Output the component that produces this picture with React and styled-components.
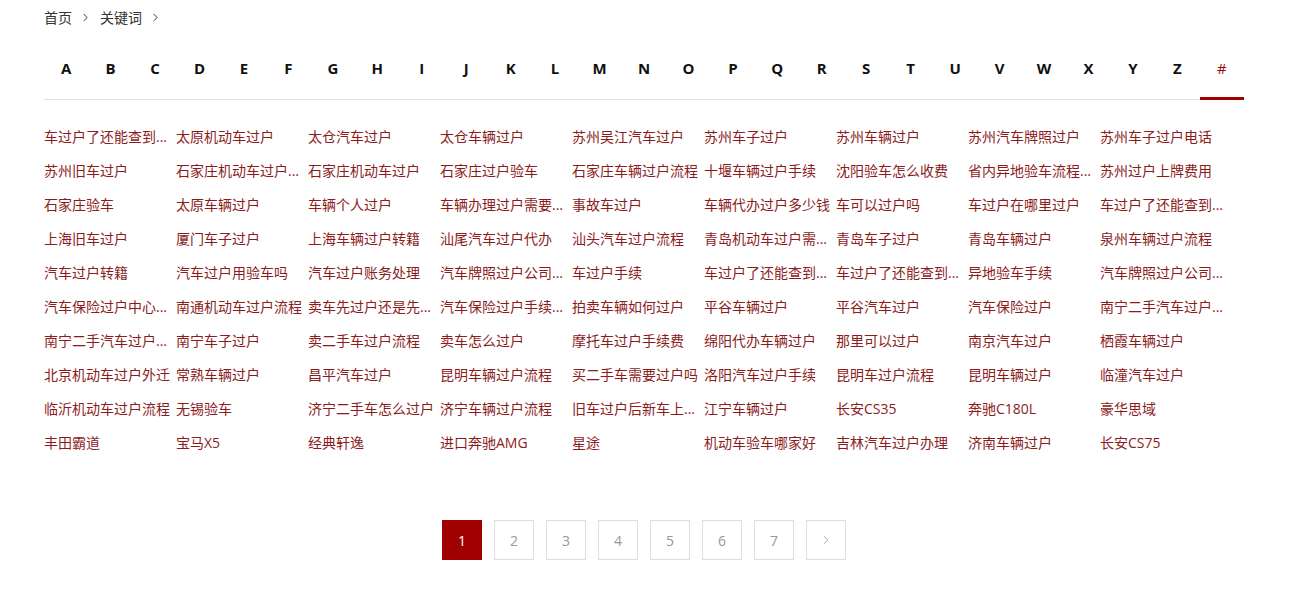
import React from 'react';
import styled, { createGlobalStyle } from 'styled-components';
import { ChevronRight } from 'lucide-react';

const GlobalStyle = createGlobalStyle`
  html, body {
    margin: 0;
    padding: 0;
    background: #fff;
  }
  body {
    font-family: "Open Sans", "Noto Sans CJK SC", sans-serif;
    color: #333;
  }
  * {
    box-sizing: border-box;
  }
`;

const Page = styled.div`
  width: 1244px;
  padding-left: 44px;
`;

const Breadcrumb = styled.div`
  display: flex;
  align-items: center;
  height: 34px;
  font-size: 14px;
  color: #333;

  svg {
    margin: 0 8px 0 7px;
    color: #333;
  }
`;

const Crumb = styled.a`
  color: #333;
  text-decoration: none;
`;

const LetterNav = styled.ul`
  list-style: none;
  margin: 10px 0 0;
  padding: 0;
  display: grid;
  grid-template-columns: repeat(27, 1fr);
  border-bottom: 1px solid #e2e2e2;
`;

const Letter = styled.li`
  height: 56px;
  margin-bottom: -1px;
  display: flex;
  align-items: center;
  justify-content: center;
  padding-bottom: 5px;
  font-size: 15px;
  font-weight: ${p => (p.$active ? 400 : 700)};
  color: ${p => (p.$active ? '#9b0c0c' : '#111')};
  border-bottom: 3px solid ${p => (p.$active ? '#a00000' : 'transparent')};
  cursor: pointer;
`;

const KeywordGrid = styled.div`
  display: grid;
  grid-template-columns: repeat(9, 132px);
  padding-top: 20px;
`;

const Keyword = styled.a`
  display: block;
  height: 34px;
  line-height: 34px;
  padding-right: 4px;
  font-size: 14px;
  color: #8b1c1c;
  text-decoration: none;
  white-space: nowrap;
  overflow: hidden;
  text-overflow: ellipsis;
`;

const Pager = styled.div`
  display: flex;
  justify-content: center;
  gap: 12px;
  margin-top: 60px;
`;

const PageButton = styled.a`
  width: 40px;
  height: 40px;
  display: flex;
  align-items: center;
  justify-content: center;
  font-size: 14px;
  color: ${p => (p.$active ? '#fff' : '#999')};
  background: ${p => (p.$active ? '#a00000' : '#fff')};
  border: 1px solid ${p => (p.$active ? '#a00000' : '#ddd')};
  cursor: pointer;
`;

const letters = 'ABCDEFGHIJKLMNOPQRSTUVWXYZ#'.split('');

const keywords = [
  '车过户了还能查到...', '太原机动车过户', '太仓汽车过户', '太仓车辆过户', '苏州吴江汽车过户', '苏州车子过户', '苏州车辆过户', '苏州汽车牌照过户', '苏州车子过户电话',
  '苏州旧车过户', '石家庄机动车过户...', '石家庄机动车过户', '石家庄过户验车', '石家庄车辆过户流程', '十堰车辆过户手续', '沈阳验车怎么收费', '省内异地验车流程...', '苏州过户上牌费用',
  '石家庄验车', '太原车辆过户', '车辆个人过户', '车辆办理过户需要...', '事故车过户', '车辆代办过户多少钱', '车可以过户吗', '车过户在哪里过户', '车过户了还能查到...',
  '上海旧车过户', '厦门车子过户', '上海车辆过户转籍', '汕尾汽车过户代办', '汕头汽车过户流程', '青岛机动车过户需...', '青岛车子过户', '青岛车辆过户', '泉州车辆过户流程',
  '汽车过户转籍', '汽车过户用验车吗', '汽车过户账务处理', '汽车牌照过户公司...', '车过户手续', '车过户了还能查到...', '车过户了还能查到...', '异地验车手续', '汽车牌照过户公司...',
  '汽车保险过户中心...', '南通机动车过户流程', '卖车先过户还是先...', '汽车保险过户手续...', '拍卖车辆如何过户', '平谷车辆过户', '平谷汽车过户', '汽车保险过户', '南宁二手汽车过户...',
  '南宁二手汽车过户...', '南宁车子过户', '卖二手车过户流程', '卖车怎么过户', '摩托车过户手续费', '绵阳代办车辆过户', '那里可以过户', '南京汽车过户', '栖霞车辆过户',
  '北京机动车过户外迁', '常熟车辆过户', '昌平汽车过户', '昆明车辆过户流程', '买二手车需要过户吗', '洛阳汽车过户手续', '昆明车过户流程', '昆明车辆过户', '临潼汽车过户',
  '临沂机动车过户流程', '无锡验车', '济宁二手车怎么过户', '济宁车辆过户流程', '旧车过户后新车上...', '江宁车辆过户', '长安CS35', '奔驰C180L', '豪华思域',
  '丰田霸道', '宝马X5', '经典轩逸', '进口奔驰AMG', '星途', '机动车验车哪家好', '吉林汽车过户办理', '济南车辆过户', '长安CS75',
];

const pages = ['1', '2', '3', '4', '5', '6', '7'];

export default function App() {
  return (
    <>
      <GlobalStyle />
      <Page>
        <Breadcrumb>
          <Crumb>首页</Crumb>
          <ChevronRight size={13} strokeWidth={1.8} />
          <Crumb>关键词</Crumb>
          <ChevronRight size={13} strokeWidth={1.8} />
        </Breadcrumb>

        <LetterNav>
          {letters.map(l => (
            <Letter key={l} $active={l === '#'}>{l}</Letter>
          ))}
        </LetterNav>

        <KeywordGrid>
          {keywords.map((k, i) => (
            <Keyword key={i}>{k}</Keyword>
          ))}
        </KeywordGrid>

        <Pager>
          {pages.map(p => (
            <PageButton key={p} $active={p === '1'}>{p}</PageButton>
          ))}
          <PageButton>
            <ChevronRight size={14} strokeWidth={1.5} />
          </PageButton>
        </Pager>
      </Page>
    </>
  );
}
